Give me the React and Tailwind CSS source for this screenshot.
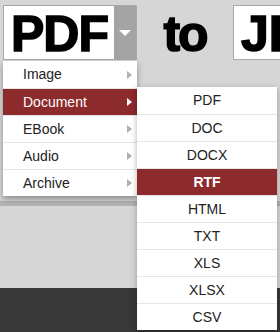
import React from "react";

const mainItems = ["Image", "Document", "EBook", "Audio", "Archive"];
const subItems = ["PDF", "DOC", "DOCX", "RTF", "HTML", "TXT", "XLS", "XLSX", "CSV"];

function Arrow({ active }) {
  return (
    <span
      className={
        "w-0 h-0 border-y-[4px] border-y-transparent border-l-[5px] " +
        (active ? "border-l-white" : "border-l-[#b0b0b0]")
      }
    />
  );
}

export default function App() {
  return (
    <div
      className="relative w-[280px] h-[332px] overflow-hidden bg-[#d6d6d6] flex flex-col"
      style={{ fontFamily: '"Liberation Sans", Arial, sans-serif' }}
    >
      <div className="h-[201px] flex items-start pt-[5px] pl-[3px]">
        <div className="flex w-[134px] h-[55px] border border-[#a9a9a9] bg-white">
          <div className="flex-1 flex items-center pl-[7px] pt-[3px] text-[50px] font-bold text-black leading-none tracking-[-1px] [-webkit-text-stroke:1.5px_black]">
            PDF
          </div>
          <div className="w-[22px] bg-[#a4a4a4] flex items-center justify-center">
            <span className="w-0 h-0 border-x-[6px] border-x-transparent border-t-[6px] border-t-white" />
          </div>
        </div>
        <div className="w-[96px] h-[55px] flex items-center justify-center pt-[3px] text-[50px] font-bold text-black leading-none tracking-[-2px] [-webkit-text-stroke:1.5px_black]">
          to
        </div>
        <div className="flex-1 h-[55px] border border-r-0 border-[#a9a9a9] bg-white overflow-hidden flex items-center pl-[7px] pt-[3px] text-[50px] font-bold text-black leading-none whitespace-nowrap [-webkit-text-stroke:1.5px_black]">
          JPG
        </div>
      </div>
      <div className="h-[5px] bg-[#b3b3b3]" />
      <div className="h-[82px]" />
      <div className="flex-1 bg-[#383838]" />

      <div className="absolute left-[3px] top-[61px] w-[134px] bg-white shadow-[0_3px_6px_rgba(0,0,0,0.35)]">
        {mainItems.map((it, i) => {
          const active = it === "Document";
          return (
            <div
              key={it}
              className={
                "h-[27px] flex items-center justify-between pl-[20px] pr-[5px] text-[14px] " +
                (i > 0 ? "border-t border-[#e6e6e6] " : "") +
                (active ? "bg-[#8c2a2c] text-white border-[#8c2a2c]" : "text-[#222]")
              }
            >
              <span>{it}</span>
              <Arrow active={active} />
            </div>
          );
        })}
      </div>

      <div className="absolute left-[137px] top-[87px] w-[140px] bg-white shadow-[0_2px_6px_rgba(0,0,0,0.3)]">
        {subItems.map((it, i) => {
          const active = it === "RTF";
          return (
            <div
              key={it}
              className={
                "h-[27px] flex items-center justify-center text-[14px] " +
                (i > 0 ? "border-t border-[#e6e6e6] " : "") +
                (active ? "bg-[#8c2a2c] text-white font-bold border-[#8c2a2c]" : "text-[#222]")
              }
            >
              {it}
            </div>
          );
        })}
      </div>
    </div>
  );
}
